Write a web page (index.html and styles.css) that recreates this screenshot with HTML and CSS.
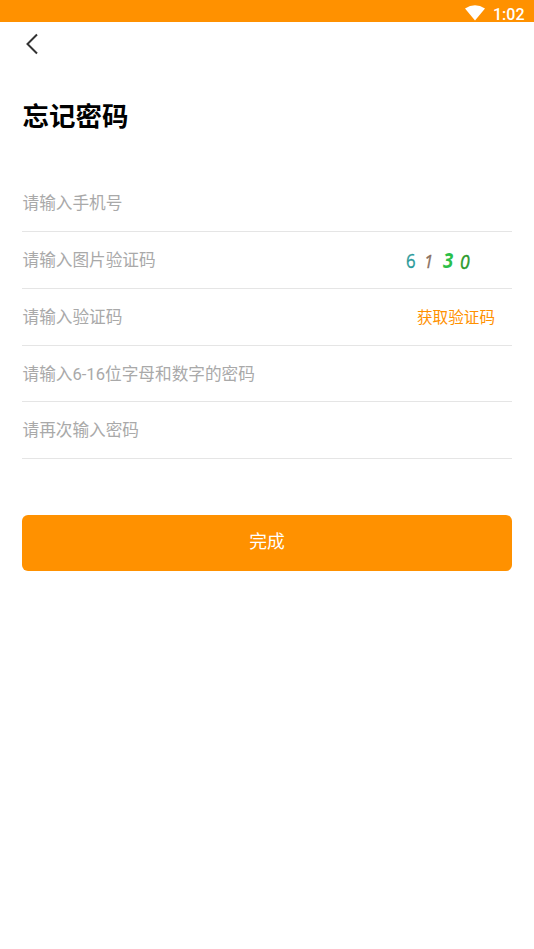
FILE: index.html
```html
<!DOCTYPE html>
<html lang="zh-CN">
<head>
<meta charset="utf-8">
<title>忘记密码</title>
<link rel="stylesheet" href="styles.css">
</head>
<body>
<header class="status">
  <svg class="wifi" viewBox="0 0 20 16"><path d="M0 3.6Q10-3.2 20 3.6L10 15.5Z"/></svg>
  <span class="clock">1:02</span>
</header>
<nav class="nav">
  <svg class="back" viewBox="0 0 14 22"><path d="M12 1.5L2.5 11L12 20.5"/></svg>
</nav>
<main class="page">
  <h1 class="title">忘记密码</h1>
  <div class="row"><span class="hint">请输入手机号</span></div>
  <div class="row">
    <span class="hint">请输入图片验证码</span>
    <svg class="captcha" viewBox="0 0 80 40">
      <text class="c1" transform="translate(6 27.4) scale(.84 1)">6</text>
      <text class="c2" transform="translate(24 27.4) scale(.92 1)">1</text>
      <text class="c3" transform="translate(43 27.4) scale(.84 1)">3</text>
      <text class="c4" transform="translate(60 27.6) scale(.88 1)">0</text>
    </svg>
  </div>
  <div class="row"><span class="hint">请输入验证码</span><span class="send">获取验证码</span></div>
  <div class="row"><span class="hint">请输入6-16位字母和数字的密码</span></div>
  <div class="row"><span class="hint">请再次输入密码</span></div>
  <button class="submit">完成</button>
</main>
</body>
</html>
```

FILE: styles.css
```css
* { box-sizing: border-box; }
body { margin: 0; background: #fff; font-family: Roboto, "Noto Sans CJK SC", sans-serif; }
.status { height: 22px; background: #ff9100; display: flex; justify-content: flex-end; padding: 5px 9.5px 0 0; gap: 8px; color: #fff; }
.wifi { width: 20px; height: 16px; fill: #fff; }
.clock { font-size: 16px; line-height: 19px; font-weight: 500; height: 17px; }
.nav { height: 44px; padding: 11px 0 0 25px; }
.back { display: block; width: 14px; height: 22px; fill: none; stroke: #333; stroke-width: 2; }
.page { padding: 31px 22px 0; }
.title { margin: 0; height: 78px; padding-left: 0.6px; font-size: 26.5px; line-height: 40px; font-weight: 700; color: #000; }
.row { height: 56.85px; padding: 2.4px 0 0 0.5px; border-bottom: 1px solid #e5e5e5; display: flex; align-items: center; justify-content: space-between; }
.hint { font-size: 16.65px; line-height: 24px; color: #a9a9a9; }
.send { font-size: 15.6px; line-height: 24px; color: #ff9100; margin-right: 17px; }
.captcha { width: 80px; height: 40px; margin-right: 32px; overflow: visible; font-family: "Open Sans", sans-serif; font-size: 20px; }
.c1 { fill: #2a9a9a; stroke: #2a9a9a; stroke-width: 0.3px; }
.c2 { fill: #8a7060; font-style: italic; font-size: 18px; stroke: #8a7060; stroke-width: 0.3px; }
.c3 { fill: #2bbf4a; font-style: italic; font-weight: 700; font-size: 22px; }
.c4 { fill: #2c9a2c; font-style: italic; stroke: #2c9a2c; stroke-width: 0.4px; font-size: 20px; }
.submit { display: block; width: 100%; height: 56px; margin-top: 55.6px; padding: 0 0 5px; border: 0; border-radius: 6px; background: #ff9100; color: #fff; font: 17.8px Roboto, "Noto Sans CJK SC", sans-serif; }
```
